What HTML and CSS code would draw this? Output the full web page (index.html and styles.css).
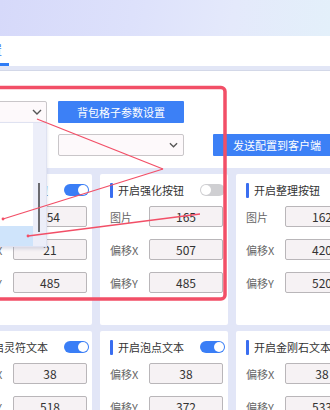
FILE: index.html
```html
<!DOCTYPE html>
<html lang="zh-CN">
<head>
    <meta charset="UTF-8">
    <meta name="viewport" content="width=device-width, initial-scale=1.0">
    <title>按钮配置</title>
    <link rel="stylesheet" href="styles.css">
</head>
<body>
<div class="page">
    <header class="top"></header>

    <nav class="tabs">
        <span class="tab active">参数设置</span>
    </nav>
    <div class="strip"></div>

    <div class="toolbar">
        <div class="bar-row first">
            <div class="select wide">
                <svg class="chev" viewBox="0 0 10 6"><polyline points="1,1 5,5 9,1"/></svg>
                <div class="dropdown">
                    <div class="options">
                        <div class="option selected"></div>
                    </div>
                    <div class="scroll"><span class="thumb"></span></div>
                </div>
            </div>
            <button class="btn">背包格子参数设置</button>
        </div>
        <div class="bar-row second">
            <div class="select">
                <svg class="chev" viewBox="0 0 10 6"><polyline points="1,1 5,5 9,1"/></svg>
            </div>
            <button class="btn send">发送配置到客户端</button>
        </div>
    </div>

    <div class="board">
        <div class="card">
            <div class="title"><span>开启修理按钮</span><span class="toggle on"></span></div>
            <div class="field"><label>图片</label><span class="input">154</span></div>
            <div class="field"><label>偏移X</label><span class="input">21</span></div>
            <div class="field"><label>偏移Y</label><span class="input">485</span></div>
        </div>
        <div class="card">
            <div class="title"><span>开启强化按钮</span><span class="toggle"></span></div>
            <div class="field"><label>图片</label><span class="input">165</span></div>
            <div class="field"><label>偏移X</label><span class="input">507</span></div>
            <div class="field"><label>偏移Y</label><span class="input">485</span></div>
        </div>
        <div class="card">
            <div class="title"><span>开启整理按钮</span><span class="toggle on"></span></div>
            <div class="field"><label>图片</label><span class="input">162</span></div>
            <div class="field"><label>偏移X</label><span class="input">420</span></div>
            <div class="field"><label>偏移Y</label><span class="input">520</span></div>
        </div>
        <div class="card">
            <div class="title"><span>开启灵符文本</span><span class="toggle on"></span></div>
            <div class="field"><label>偏移X</label><span class="input">38</span></div>
            <div class="field"><label>偏移Y</label><span class="input">518</span></div>
        </div>
        <div class="card">
            <div class="title"><span>开启泡点文本</span><span class="toggle on"></span></div>
            <div class="field"><label>偏移X</label><span class="input">38</span></div>
            <div class="field"><label>偏移Y</label><span class="input">372</span></div>
        </div>
        <div class="card">
            <div class="title"><span>开启金刚石文本</span><span class="toggle on"></span></div>
            <div class="field"><label>偏移X</label><span class="input">38</span></div>
            <div class="field"><label>偏移Y</label><span class="input">533</span></div>
        </div>
    </div>

    <!-- annotation layer drawn over the screenshot -->
    <svg class="marks" viewBox="0 0 330 410">
        <rect x="-10" y="87.5" width="235" height="211.5" rx="4"/>
        <line x1="37" y1="119" x2="163" y2="169"/>
        <line x1="163" y1="169" x2="3" y2="219"/>
        <line x1="28" y1="236" x2="200" y2="214"/>
        <circle cx="3" cy="219" r="1.4"/>
        <circle cx="28" cy="236" r="1.4"/>
    </svg>
</div>
</body>
</html>
```

FILE: styles.css
```css
body { margin: 0; overflow: hidden; font-family: "Noto Sans CJK SC", "Noto Sans", sans-serif; }
.page { position: relative; width: 330px; height: 410px; overflow: hidden; background: #fff; }

.top {
    height: 36px;
    background: linear-gradient(100deg, #d6d9fa 0%, #dde1fb 40%, #e4e9fb 70%, #e3f0fa 100%);
}

.tabs { height: 30px; background: #fff; display: flex; }
.tab {
    margin-left: -60px;
    width: 62px;
    padding-right: 7px;
    text-align: right;
    font-size: 12px;
    line-height: 27px;
    color: #3a7ef6;
    border-bottom: 3px solid #2f7cf6;
}
.strip { height: 4px; background: #e2e6f6; border-bottom: 1px solid #d3d8e8; }

.toolbar { padding: 30px 0 12px; display: flex; flex-direction: column; gap: 11px; }
.bar-row { display: flex; height: 22px; }
.bar-row > * { flex-shrink: 0; }
.bar-row.first { margin-left: -103px; gap: 11px; }
.bar-row.second { margin-left: 58px; gap: 29px; }

.select {
    position: relative;
    width: 126px;
    box-sizing: border-box;
    border: 1px solid #c9c6c9;
    border-radius: 2px;
    background: #fdf9fb;
}
.select.wide { width: 150px; }
.chev { position: absolute; right: 5px; top: 7px; width: 9px; height: 6px; }
.select.wide .chev { right: 4px; width: 10px; }
.chev polyline { fill: none; stroke: #555; stroke-width: 1.4; }

.btn {
    width: 126px;
    border: none;
    border-radius: 1px;
    background: #3c80f6;
    color: #fff;
    font-family: inherit;
    font-size: 11px;
    padding: 0;
}
.btn.send { width: 128px; }

.dropdown {
    position: absolute;
    top: 20px;
    right: -1px;
    width: 150px;
    height: 125px;
    display: flex;
    background: #fff;
    border: 1px solid #dfe2f1;
    box-sizing: border-box;
    box-shadow: 0 2px 3px rgba(120, 130, 170, 0.25);
    z-index: 5;
}
.options { flex: 1; display: flex; flex-direction: column; justify-content: flex-end; }
.option { height: 20px; }
.option.selected { background: #cfe4fb; }
.scroll { width: 13px; background: #eceef9; position: relative; }
.thumb { position: absolute; left: 5px; top: 60px; width: 2px; height: 49px; background: #6b6b70; }

.board {
    margin-left: -36px;
    padding: 6px 0 0;
    background: #e2e6f7;
    display: grid;
    grid-template-columns: repeat(3, 128px);
    gap: 6px 8px;
    height: 300px;
}
.card {
    height: 151px;
    box-sizing: border-box;
    padding: 9px 5px 0 10px;
    background: #fff;
    border-radius: 2px;
}
.title {
    display: flex;
    align-items: center;
    height: 14px;
    font-size: 11px;
    color: #333;
    white-space: nowrap;
    margin-bottom: 9px;
    margin-right: -2px;
}
.title span:first-child { flex: 1; display: flex; align-items: center; gap: 5px; }
.title span:first-child::before {
    content: "";
    width: 3px;
    height: 15px;
    background: #3a6ef0;
    border-radius: 1px;
}
.toggle {
    position: relative;
    width: 25px;
    height: 12px;
    border-radius: 6px;
    background: #cfcfd2;
}
.toggle::after {
    content: "";
    position: absolute;
    top: 1px;
    left: 1px;
    width: 10px;
    height: 10px;
    border-radius: 50%;
    background: #fff;
}
.toggle.on { background: #3a7ef6; }
.toggle.on::after { left: 14px; }

.field { display: flex; align-items: center; height: 21px; margin-bottom: 12px; }
.field label { width: 39px; font-size: 11px; color: #666; white-space: nowrap; }
.input {
    width: 74px;
    height: 21px;
    box-sizing: border-box;
    border: 1px solid #b9b6b9;
    border-radius: 2px;
    background: #f6f2f4;
    text-align: center;
    font-size: 12px;
    line-height: 19px;
    color: #333;
}

.marks {
    position: absolute;
    left: 0;
    top: 0;
    width: 330px;
    height: 410px;
    pointer-events: none;
    z-index: 10;
    overflow: visible;
}
.marks rect { fill: none; stroke: #f24f67; stroke-width: 3.5; }
.marks line { stroke: #f24f67; stroke-width: 1.3; }
.marks circle { fill: #f24f67; }
```
